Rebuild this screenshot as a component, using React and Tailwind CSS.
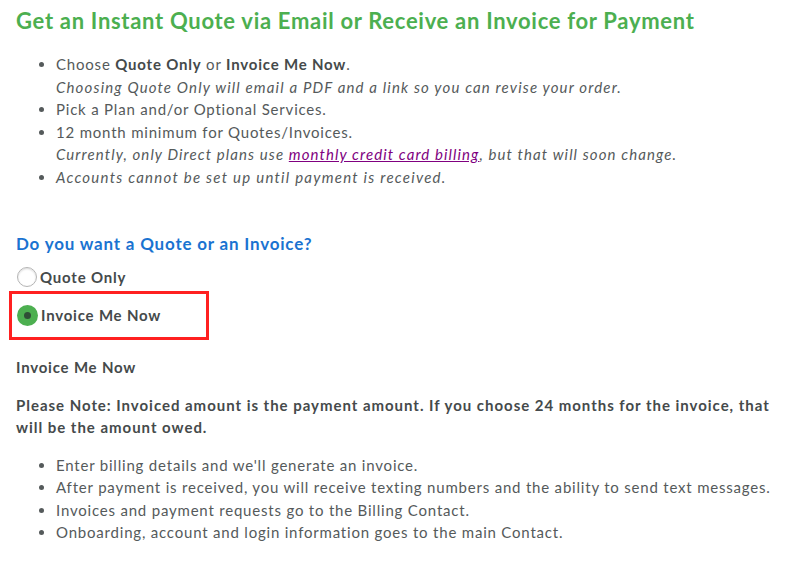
import { useState } from 'react';

const font = { fontFamily: 'Lato, "Open Sans", sans-serif' };

function Radio({ checked }) {
  return checked ? (
    <span className="w-[21px] h-[21px] rounded-full bg-[#4caf50] flex items-center justify-center shrink-0">
      <span className="w-[7px] h-[7px] rounded-full bg-[#2f4f36]" />
    </span>
  ) : (
    <span className="w-[20px] h-[20px] rounded-full bg-white border border-[#b5b5b5] shadow-[inset_0_1px_2px_rgba(0,0,0,0.15)] shrink-0" />
  );
}

export default function App() {
  const [choice, setChoice] = useState('invoice');

  return (
    <div className="w-[792px] h-[576px] bg-white text-[#555a5b] overflow-hidden tracking-[0.8px]" style={font}>
      <div className="px-4 pt-[7px]">
        <h1 className="text-[22px] leading-[28px] font-bold text-[#4caf50] tracking-[0.7px]">
          Get an Instant Quote via Email or Receive an Invoice for Payment
        </h1>

        <ul className="list-disc pl-[40px] mt-[18px] text-[15px] leading-[22.5px]">
          <li>
            Choose <b className="text-[#454a4b]">Quote Only</b> or <b className="text-[#454a4b]">Invoice Me Now</b>.
            <br />
            <i className="tracking-[1.15px]">Choosing Quote Only will email a PDF and a link so you can revise your order.</i>
          </li>
          <li>Pick a Plan and/or Optional Services.</li>
          <li>
            12 month minimum for Quotes/Invoices.
            <br />
            <i className="tracking-[1.1px]">
              Currently, only Direct plans use{' '}
              <a href="#" className="text-[#800080] underline">monthly credit card billing</a>, but that will soon change.
            </i>
          </li>
          <li><i className="tracking-[1.25px]">Accounts cannot be set up until payment is received.</i></li>
        </ul>

        <h2 className="mt-[44px] text-[17px] leading-[24px] font-bold text-[#1a73d1]">
          Do you want a Quote or an Invoice?
        </h2>

        <div className="mt-[9px] flex flex-col">
          <label className="flex items-center gap-[3px] h-[24px] pl-[1px] cursor-pointer" onClick={() => setChoice('quote')}>
            <Radio checked={choice === 'quote'} />
            <span className="text-[15px] font-bold text-[#454a4b]">Quote Only</span>
          </label>
          <div className="mt-[2px] -ml-[7px] w-[200px] h-[49px] border-[3px] border-[#ff2020] flex items-center pl-[5px]">
            <label className="flex items-center gap-[3px] cursor-pointer" onClick={() => setChoice('invoice')}>
              <Radio checked={choice === 'invoice'} />
              <span className="text-[15px] font-bold text-[#454a4b]">Invoice Me Now</span>
            </label>
          </div>
        </div>

        <p className="mt-[16px] text-[15px] leading-[22.5px] font-bold text-[#454a4b]">Invoice Me Now</p>

        <p className="mt-[15px] text-[15px] leading-[22.5px] font-bold text-[#454a4b] tracking-[0.97px]">
          Please Note: Invoiced amount is the payment amount. If you choose 24 months for the invoice, that will be the amount owed.
        </p>

        <ul className="list-disc pl-[40px] mt-[15px] text-[15px] leading-[22.5px]">
          <li>Enter billing details and we'll generate an invoice.</li>
          <li>After payment is received, you will receive texting numbers and the ability to send text messages.</li>
          <li>Invoices and payment requests go to the Billing Contact.</li>
          <li>Onboarding, account and login information goes to the main Contact.</li>
        </ul>
      </div>
    </div>
  );
}
